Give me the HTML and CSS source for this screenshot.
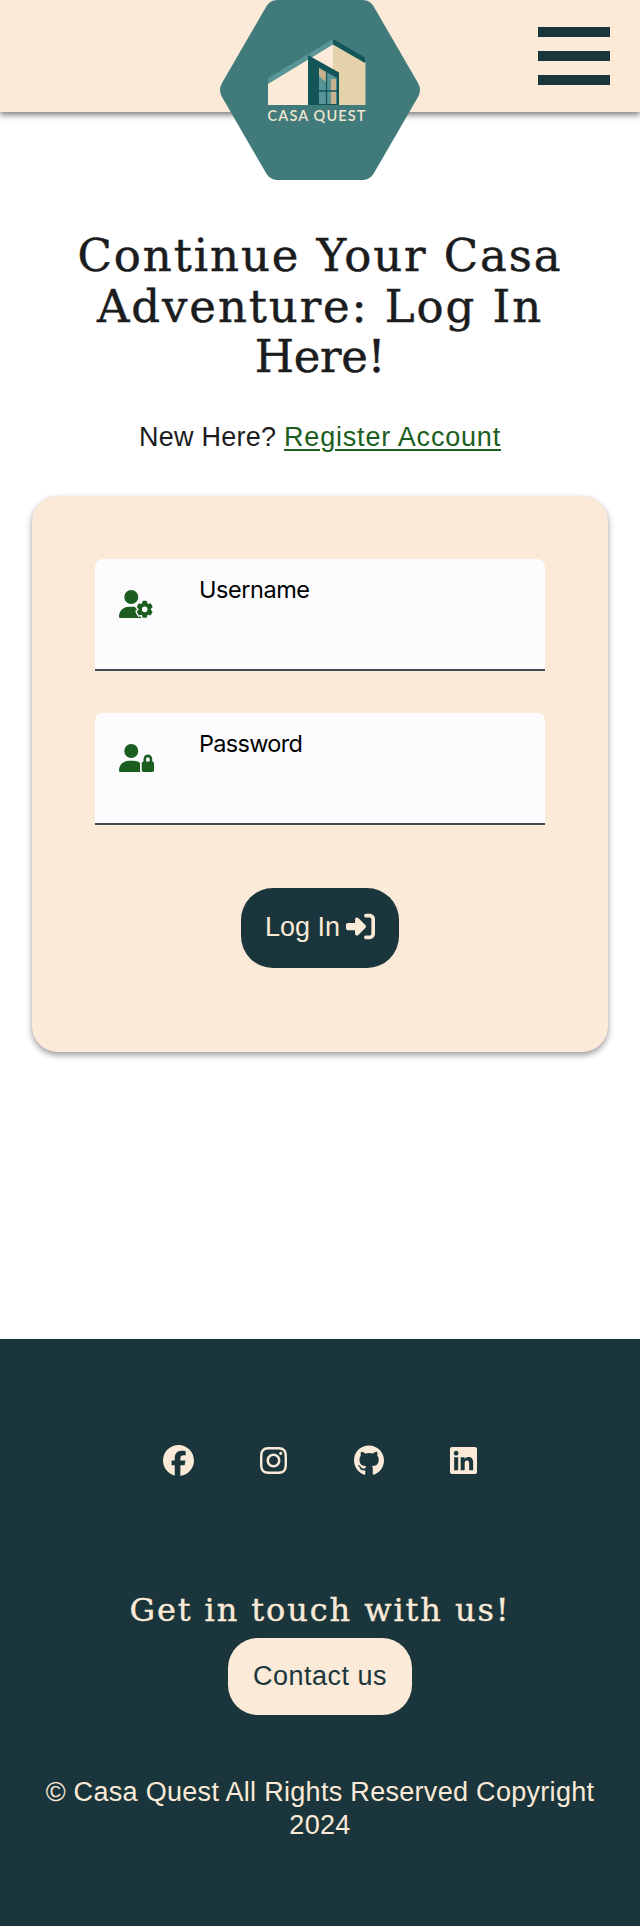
FILE: index.html
```
<!DOCTYPE html>
<html lang="en">
<head>
<meta charset="utf-8">
<title>Casa Quest - Log In</title>
<link rel="stylesheet" href="styles.css">
</head>
<body>
<header class="header">
  <a class="logo" href="#" aria-label="Casa Quest home">
    <svg width="200" height="180" viewBox="0 0 200 180">
      <path fill="#407a7b" d="M57 0H143Q150 0 154 7L198 83Q202 90 198 97L154 173Q150 180 143 180H57Q50 180 46 173L2 97Q-2 90 2 83L46 7Q50 0 57 0Z"/>
      <path fill="#faead7" d="M48 83L113 44V105H48Z"/>
      <path fill="#e5d1ab" d="M113 44L145.500 62V105H113Z"/>
      <path fill="#599496" d="M48 78L113 39V44.500L48 84Z"/>
      <path fill="#12565a" d="M113 39L145 57.500V63L113 44.500Z"/>
      <path fill="#12565a" d="M88 55L119 72.500V105H88Z"/>
      <path fill="#599496" d="M99 68L117 78V104H99Z"/>
      <path fill="#c9b28f" d="M99 68L106 72V82L99 76ZM111 79H116V104H111Z"/>
      <path fill="none" stroke="#12565a" stroke-width="1.300" d="M106.500 72V105M99 91H118M117.500 77V105"/>
      <text class="logo-text" x="47.500" y="120.500" textLength="98">CASA QUEST</text>
    </svg>
  </a>
  <button class="menu" aria-label="Menu"><span class="bar"></span><span class="bar"></span><span class="bar"></span></button>
</header>
<main class="main">
  <h1 class="title">Continue Your Casa<br>Adventure: Log In<br><span class="title-end">Here!</span></h1>
  <p class="intro">New Here? <a class="link" href="#">Register Account</a></p>
  <form class="card">
    <div class="field">
      <svg class="user-icon" viewBox="0 0 640 512"><path d="M224 256A128 128 0 1 0 224 0a128 128 0 1 0 0 256zm-45.700 48C79.800 304 0 383.800 0 482.300C0 498.700 13.300 512 29.700 512H418C400 500 385 480 384 352V345.700c-31-26-71-41.700-114.600-41.700H178.300z"/><g transform="translate(-49 -23) scale(1.050 1.100)"><path class="gear gear-gap" d="M457 205c25-7 50-7 75 0l8 38 17 10 37-12c18 18 31 40 38 65l-29 26v20l29 26c-7 25-20 47-38 65l-37-12-17 10-8 38c-25 7-50 7-75 0l-8-38-17-10-37 12c-18-18-31-40-38-65l29-26v-20l-29-26c7-25 20-47 38-65l37 12 17-10z"/><path fill-rule="evenodd" d="M457 205c25-7 50-7 75 0l8 38 17 10 37-12c18 18 31 40 38 65l-29 26v20l29 26c-7 25-20 47-38 65l-37-12-17 10-8 38c-25 7-50 7-75 0l-8-38-17-10-37 12c-18-18-31-40-38-65l29-26v-20l-29-26c7-25 20-47 38-65l37 12 17-10zM494.500 294a48 48 0 1 0 0 96a48 48 0 1 0 0-96z"/></g></svg>
      <label class="label" for="username">Username</label>
      <input class="input" id="username" type="text">
    </div>
    <div class="field">
      <svg class="user-icon" viewBox="0 0 640 512"><path d="M224 256A128 128 0 1 0 224 0a128 128 0 1 0 0 256zm-45.700 48C79.800 304 0 383.800 0 482.300C0 498.700 13.300 512 29.700 512H392.600c-5.400-9.400-8.600-20.300-8.600-32V352c0-2.100 .1-4.200 .3-6.300c-31-26-71-41.700-114.600-41.700H178.300zM528 240c17.700 0 32 14.300 32 32v48H496V272c0-17.700 14.300-32 32-32zm-80 32v48c-17.700 0-32 14.300-32 32V480c0 17.700 14.300 32 32 32H608c17.700 0 32-14.300 32-32V352c0-17.700-14.300-32-32-32V272c0-44.200-35.800-80-80-80s-80 35.800-80 80z"/></svg>
      <label class="label password-label" for="password">Password</label>
      <input class="input" id="password" type="password">
    </div>
    <button class="button login" type="button"><span>Log In</span><svg class="login-icon" viewBox="0 0 512 512"><path d="M217.900 105.900L340.700 228.700c7.200 7.200 11.300 17.100 11.300 27.300s-4.100 20.100-11.300 27.300L217.900 406.100c-6.400 6.400-15 9.900-24 9.900c-18.700 0-33.900-15.200-33.900-33.900V320H32c-17.700 0-32-14.300-32-32V224c0-17.700 14.300-32 32-32H160V129.900c0-18.700 15.200-33.900 33.900-33.900c9 0 17.600 3.600 24 9.900zM352 416h64c17.700 0 32-14.300 32-32V128c0-17.700-14.300-32-32-32H352c-17.700 0-32-14.300-32-32s14.300-32 32-32h64c53 0 96 43 96 96V384c0 53-43 96-96 96H352c-17.700 0-32-14.300-32-32s14.300-32 32-32z"/></svg></button>
  </form>
</main>
<footer class="footer">
  <nav class="social">
    <a href="#" aria-label="Facebook"><svg class="round" viewBox="0 0 512 512"><path d="M512 256C512 114.600 397.400 0 256 0S0 114.600 0 256C0 376 82.700 476.800 194.200 504.500V334.200H141.400V256h52.800V222.300c0-87.100 39.400-127.500 125-127.500c16.200 0 44.200 3.200 55.700 6.400V172c-6-.6-16.500-1-29.600-1c-42 0-58.200 15.900-58.200 57.200V256h83.600l-14.400 78.200H287V510.100C413.800 494.800 512 386.900 512 256h0z"/></svg></a>
    <a href="#" aria-label="Instagram"><svg class="square" viewBox="0 0 448 512"><path d="M224.100 141c-63.600 0-114.900 51.300-114.900 114.900s51.300 114.900 114.900 114.900S339 319.500 339 255.900 287.700 141 224.100 141zm0 189.600c-41.100 0-74.700-33.500-74.700-74.700s33.500-74.700 74.700-74.700 74.700 33.500 74.700 74.700-33.600 74.700-74.700 74.700zm146.400-194.300c0 14.900-12 26.800-26.800 26.800-14.900 0-26.800-12-26.800-26.800s12-26.800 26.800-26.800 26.800 12 26.800 26.800zm76.100 27.200c-1.700-35.900-9.900-67.700-36.200-93.900-26.200-26.200-58-34.400-93.900-36.200-37-2.100-147.900-2.100-184.900 0-35.800 1.700-67.600 9.900-93.900 36.100s-34.400 58-36.200 93.900c-2.100 37-2.100 147.900 0 184.900 1.700 35.900 9.900 67.700 36.200 93.900s58 34.400 93.900 36.200c37 2.100 147.900 2.100 184.900 0 35.900-1.700 67.700-9.900 93.900-36.200 26.200-26.200 34.400-58 36.200-93.900 2.100-37 2.100-147.800 0-184.800zM398.800 388c-7.800 19.600-22.900 34.700-42.600 42.600-29.500 11.700-99.500 9-132.100 9s-102.700 2.600-132.100-9c-19.600-7.800-34.700-22.900-42.600-42.600-11.700-29.500-9-99.500-9-132.100s-2.600-102.700 9-132.100c7.800-19.600 22.900-34.700 42.600-42.600 29.500-11.700 99.500-9 132.100-9s102.700-2.600 132.100 9c19.600 7.800 34.700 22.900 42.600 42.600 11.700 29.500 9 99.500 9 132.100s2.700 102.700-9 132.100z"/></svg></a>
    <a href="#" aria-label="GitHub"><svg class="github" viewBox="0 0 496 512"><path d="M244.800 8C106.100 8 0 113.300 0 252c0 110.900 69.800 205.800 169.500 239.200 12.800 2.300 17.300-5.600 17.300-12.100 0-6.200-.3-40.400-.3-61.400 0 0-70 15-84.700-29.800 0 0-11.400-29.100-27.800-36.600 0 0-22.900-15.700 1.600-15.400 0 0 24.900 2 38.600 25.800 21.900 38.600 58.600 27.500 72.900 20.900 2.300-16 8.800-27.100 16-33.700-55.900-6.200-112.300-14.300-112.300-110.500 0-27.500 7.600-41.300 23.600-58.900-2.600-6.500-11.100-33.300 2.600-67.900 20.900-6.500 69 27 69 27 20-5.600 41.500-8.500 62.800-8.500s42.800 2.900 62.800 8.500c0 0 48.100-33.600 69-27 13.700 34.700 5.200 61.400 2.600 67.900 16 17.700 25.800 31.500 25.800 58.900 0 96.500-58.900 104.200-114.800 110.500 9.200 7.900 17 22.900 17 46.400 0 33.700-.3 75.400-.3 83.600 0 6.500 4.600 14.400 17.300 12.100C428.200 457.800 496 362.900 496 252 496 113.300 383.500 8 244.800 8z"/></svg></a>
    <a href="#" aria-label="LinkedIn"><svg class="square" viewBox="0 0 448 512"><path d="M416 32H31.900C14.300 32 0 46.500 0 64.300v383.400C0 465.500 14.300 480 31.900 480H416c17.600 0 32-14.500 32-32.300V64.300c0-17.800-14.400-32.300-32-32.300zM135.400 416H69V202.200h66.500V416zm-33.200-243c-21.300 0-38.500-17.300-38.500-38.500S80.900 96 102.200 96c21.200 0 38.500 17.300 38.500 38.500 0 21.300-17.200 38.500-38.500 38.500zm282.100 243h-66.400V312c0-24.800-.5-56.700-34.500-56.700-34.600 0-39.900 27-39.900 54.900V416h-66.400V202.200h63.700v29.200h.9c8.900-16.800 30.600-34.500 62.900-34.500 67.200 0 79.700 44.300 79.700 101.900V416z"/></svg></a>
  </nav>
  <h2 class="touch">Get in touch with us!</h2>
  <a class="button contact" href="#">Contact us</a>
  <p class="copyright">© Casa Quest All Rights Reserved Copyright<br>2024</p>
</footer>
</body>
</html>
```
FILE: styles.css
```
* { box-sizing: border-box; }
body {
  margin: 0;
  background: #fff;
  color: #1b1c1e;
  font-family: "Liberation Sans", Arial, sans-serif;
  font-size: 27px;
  line-height: 33px;
}
.header {
  position: relative;
  display: flex;
  justify-content: flex-end;
  align-items: center;
  height: 112px;
  padding-right: 30px;
  background: #faead7;
  box-shadow: 0 3px 6px rgba(0, 0, 0, .5);
}
.logo { position: absolute; top: 0; left: 220px; height: 180px; }
.logo-text { fill: #f1e6cf; font: 600 14.5px Lato, sans-serif; }
.menu {
  display: flex;
  flex-direction: column;
  gap: 14px;
  width: 72px;
  padding: 0;
  border: 0;
  background: none;
}
.bar { height: 10px; background: #1a363c; }
.main { height: 1227px; padding: 119px 32px 0; text-align: center; }
.title {
  margin: 0;
  font: 400 45px/50.500px "DejaVu Serif", serif;
  letter-spacing: 1.9px;
  white-space: nowrap;
  -webkit-text-stroke: .5px currentColor;
}
.title-end { letter-spacing: -.3px; }
.intro { margin: 38px 0 0; letter-spacing: .25px; white-space: nowrap; }
.link {
  color: #1b5e20;
  letter-spacing: .8px;
  text-decoration-thickness: 2px;
  text-underline-offset: 3px;
}
.card {
  display: flex;
  flex-direction: column;
  align-items: center;
  height: 556px;
  margin-top: 42px;
  padding-top: 63px;
  border-radius: 26px;
  background: #faead7;
  box-shadow: 0 3px 6px rgba(0, 0, 0, .4);
}
.field {
  display: grid;
  grid-template-columns: 80px 1fr;
  grid-template-rows: 38px 1fr;
  width: 450px;
  height: 112px;
  margin-bottom: 42px;
  padding: 12px 24px 0;
  border-bottom: 2px solid #424a55;
  border-radius: 8px 8px 0 0;
  background: #fcfcff;
}
.user-icon { width: 35px; height: 28px; margin-top: 19px; fill: #1b5e20; }
.gear-gap { fill: #fcfcff; stroke: #fcfcff; stroke-width: 48; }
.label {
  color: #000;
  font: 400 23.5px/38px Inter, sans-serif;
  letter-spacing: -.45px;
  text-align: left;
}
.password-label { letter-spacing: -.7px; }
.input { grid-column: 2; border: 0; background: none; }
.button {
  display: flex;
  align-items: center;
  justify-content: center;
  border: 0;
  font: 400 27px/33px "Liberation Sans", Arial, sans-serif;
  text-decoration: none;
  white-space: nowrap;
}
.login {
  gap: 6px;
  width: 158px;
  height: 80px;
  margin-top: 21px;
  border-radius: 32px;
  background: #1a363c;
  color: #faead7;
}
.login-icon { width: 29px; height: 29px; margin-top: -2px; fill: #faead7; }
.footer {
  display: flex;
  flex-direction: column;
  align-items: center;
  height: 587px;
  padding-top: 106px;
  background: #1a363c;
  color: #faead7;
  text-align: center;
}
.social {
  display: flex;
  justify-content: space-between;
  width: 315px;
  height: 31px;
}
.social a { display: flex; }
.social svg { height: 31px; fill: #faead7; }
.round { width: 31px; }
.square { width: 27px; }
.github { width: 30px; }
.touch {
  margin: 114px 0 8px;
  font: 400 32px/40px "DejaVu Serif", serif;
  letter-spacing: 1.9px;
  white-space: nowrap;
  -webkit-text-stroke: .4px currentColor;
}
.contact {
  width: 184px;
  height: 77px;
  border-radius: 30px;
  background: #faead7;
  color: #1a363c;
  letter-spacing: .5px;
}
.copyright { margin: 61px 0 0; letter-spacing: .3px; white-space: nowrap; }
```
